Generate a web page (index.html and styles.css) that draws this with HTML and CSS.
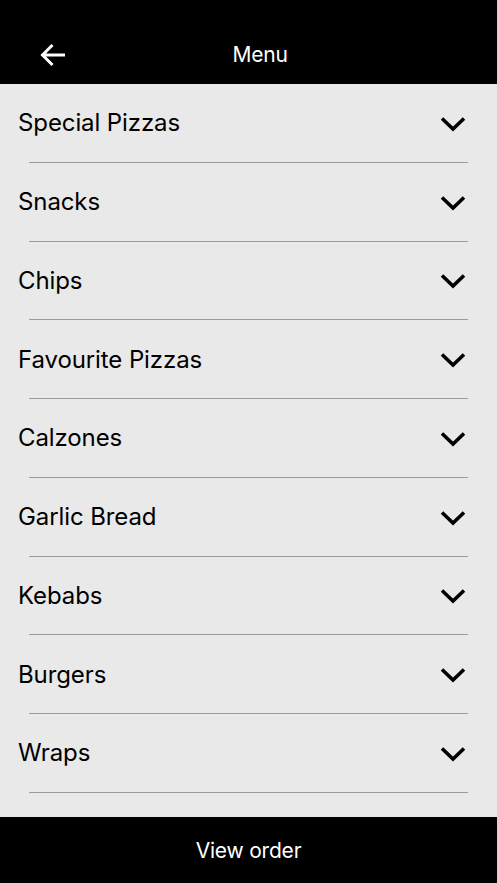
FILE: index.html
```html
<!DOCTYPE html>
<html lang="en">
<head>
    <meta charset="UTF-8">
    <meta name="viewport" content="width=device-width, initial-scale=1.0">
    <title>Menu</title>
    <link rel="stylesheet" href="styles.css">
</head>
<body>
    <div class="screen">
        <header class="topbar">
            <button class="back-btn" aria-label="Back">
                <svg width="26" height="24" viewBox="0 0 26 24">
                    <path d="M2.5 12 H25 M12.5 2 L2.5 12 L12.5 22" fill="none" stroke="#fff" stroke-width="3"/>
                </svg>
            </button>
            <h1 class="title">Menu</h1>
        </header>

        <ul class="menu-list">
            <li class="menu-item"><span>Special Pizzas</span><svg class="chevron" width="26" height="16" viewBox="0 0 26 16"><path d="M2 2.5 L13 13 L24 2.5" fill="none" stroke="#000" stroke-width="3.6"/></svg></li>
            <li class="divider"></li>
            <li class="menu-item"><span>Snacks</span><svg class="chevron" width="26" height="16" viewBox="0 0 26 16"><path d="M2 2.5 L13 13 L24 2.5" fill="none" stroke="#000" stroke-width="3.6"/></svg></li>
            <li class="divider"></li>
            <li class="menu-item"><span>Chips</span><svg class="chevron" width="26" height="16" viewBox="0 0 26 16"><path d="M2 2.5 L13 13 L24 2.5" fill="none" stroke="#000" stroke-width="3.6"/></svg></li>
            <li class="divider"></li>
            <li class="menu-item"><span>Favourite Pizzas</span><svg class="chevron" width="26" height="16" viewBox="0 0 26 16"><path d="M2 2.5 L13 13 L24 2.5" fill="none" stroke="#000" stroke-width="3.6"/></svg></li>
            <li class="divider"></li>
            <li class="menu-item"><span>Calzones</span><svg class="chevron" width="26" height="16" viewBox="0 0 26 16"><path d="M2 2.5 L13 13 L24 2.5" fill="none" stroke="#000" stroke-width="3.6"/></svg></li>
            <li class="divider"></li>
            <li class="menu-item"><span>Garlic Bread</span><svg class="chevron" width="26" height="16" viewBox="0 0 26 16"><path d="M2 2.5 L13 13 L24 2.5" fill="none" stroke="#000" stroke-width="3.6"/></svg></li>
            <li class="divider"></li>
            <li class="menu-item"><span>Kebabs</span><svg class="chevron" width="26" height="16" viewBox="0 0 26 16"><path d="M2 2.5 L13 13 L24 2.5" fill="none" stroke="#000" stroke-width="3.6"/></svg></li>
            <li class="divider"></li>
            <li class="menu-item"><span>Burgers</span><svg class="chevron" width="26" height="16" viewBox="0 0 26 16"><path d="M2 2.5 L13 13 L24 2.5" fill="none" stroke="#000" stroke-width="3.6"/></svg></li>
            <li class="divider"></li>
            <li class="menu-item"><span>Wraps</span><svg class="chevron" width="26" height="16" viewBox="0 0 26 16"><path d="M2 2.5 L13 13 L24 2.5" fill="none" stroke="#000" stroke-width="3.6"/></svg></li>
            <li class="divider"></li>
        </ul>

        <button class="order-btn">View order</button>
    </div>
</body>
</html>
```

FILE: styles.css
```css
* {
    box-sizing: border-box;
}

body {
    margin: 0;
    font-family: Inter, "Liberation Sans", Arial, sans-serif;
    background-color: #e9e9e9;
}

.screen {
    display: flex;
    flex-direction: column;
    height: 883px;
    overflow: hidden;
}

.topbar {
    position: relative;
    display: flex;
    align-items: center;
    height: 84px;
    padding-top: 24px;
    background: #000;
    color: #fff;
}

.back-btn {
    position: absolute;
    left: 40px;
    top: 43px;
    padding: 0;
    border: none;
    background: none;
    line-height: 0;
    cursor: pointer;
}

.title {
    flex: 1;
    margin: 0;
    padding-left: 23px;
    text-align: center;
    font-size: 21px;
    font-weight: 400;
    letter-spacing: -0.2px;
}

.menu-list {
    flex: 1;
    margin: 0;
    padding: 0;
    list-style: none;
}

.menu-item {
    display: flex;
    align-items: center;
    justify-content: space-between;
    height: 77.75px;
    padding: 0 31px 0 18px;
    font-size: 24px;
    letter-spacing: -0.1px;
    color: #000;
}

.chevron {
    margin-top: 2px;
}

.divider {
    height: 1px;
    margin: 0 29px;
    background-color: #9b9b9b;
}

.order-btn {
    height: 66px;
    width: 100%;
    border: none;
    background: #000;
    color: #fff;
    font-family: inherit;
    font-size: 21px;
    letter-spacing: -0.2px;
    cursor: pointer;
}
```
